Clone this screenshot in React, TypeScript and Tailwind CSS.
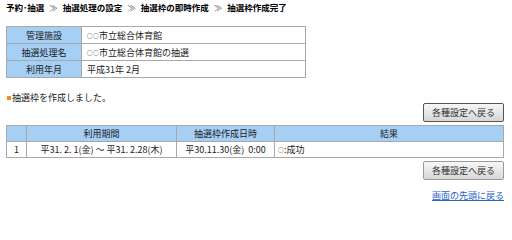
import React from 'react';

const crumbs = ['予約･抽選', '抽選処理の設定', '抽選枠の即時作成', '抽選枠作成完了'];

const Dots: React.FC<{ n?: number }> = ({ n = 2 }) => (
    <span className="text-[5.5px] align-middle tracking-[0.5px]">{'○'.repeat(n)}</span>
);

const info: { label: string; value: React.ReactNode }[] = [
    { label: '管理施設', value: <><Dots />市立総合体育館</> },
    { label: '抽選処理名', value: <><Dots />市立総合体育館の抽選</> },
    { label: '利用年月', value: '平成31年 2月' },
];

const BackButton: React.FC<{ dark?: boolean }> = ({ dark }) => (
    <div className="flex justify-end">
        <button
            className={`w-[81px] h-[19px] text-[9px] leading-none text-[#333] bg-gradient-to-b from-[#f7f7f7] to-[#d6d6d6] border ${dark ? 'border-[#555]' : 'border-[#9a9a9a]'} rounded-[2px]`}
        >
            各種設定へ戻る
        </button>
    </div>
);

export default function App() {
    return (
        <div className="w-[512px] h-[224px] bg-white pl-[6px] pr-[8px] pt-[1px] text-[9px] text-[#222] font-['Noto_Sans_CJK_JP',sans-serif]">
            {/* breadcrumb */}
            <div className="flex items-center h-[12px] leading-[12px] font-bold text-[8.5px] text-black">
                {crumbs.map((c, i) => (
                    <React.Fragment key={c}>
                        {i > 0 && <span className="mx-[5px] font-normal text-[#555]">≫</span>}
                        <span>{c}</span>
                    </React.Fragment>
                ))}
            </div>

            {/* info table */}
            <table className="mt-[13px] w-[300px] border-collapse">
                <tbody>
                    {info.map((r) => (
                        <tr key={r.label} className="h-[17px]">
                            <td className="w-[75px] p-0 border border-[#a8a8a8] bg-[#a6cff6] text-center leading-none">{r.label}</td>
                            <td className="p-0 pl-[5px] border border-[#a8a8a8] leading-none">{r.value}</td>
                        </tr>
                    ))}
                </tbody>
            </table>

            {/* message */}
            <div className="mt-[14px] h-[11px] flex items-center leading-none">
                <span className="w-[4px] h-[4px] bg-[#f08c2a] mr-[1px] ml-[1px]" />
                <span>抽選枠を作成しました。</span>
            </div>

            <BackButton dark />

            {/* result table */}
            <table className="mt-[3px] w-full border-collapse">
                <thead>
                    <tr className="h-[16px] bg-[#a6cff6]">
                        <th className="w-[20px] p-0 border border-[#a8a8a8] font-normal" />
                        <th className="w-[150px] p-0 border border-[#a8a8a8] font-normal leading-none">利用期間</th>
                        <th className="w-[98px] p-0 border border-[#a8a8a8] font-normal leading-none">抽選枠作成日時</th>
                        <th className="p-0 border border-[#a8a8a8] font-normal leading-none">結果</th>
                    </tr>
                </thead>
                <tbody>
                    <tr className="h-[16px]">
                        <td className="p-0 border border-[#a8a8a8] text-center leading-none">1</td>
                        <td className="p-0 border border-[#a8a8a8] text-center leading-none">平31. 2. 1(金) ～ 平31. 2.28(木)</td>
                        <td className="p-0 border border-[#a8a8a8] text-center leading-none whitespace-pre">平30.11.30(金)  0:00</td>
                        <td className="p-0 pl-[3px] border border-[#a8a8a8] leading-none"><Dots n={1} />:成功</td>
                    </tr>
                </tbody>
            </table>

            <div className="mt-[3px]">
                <BackButton />
            </div>

            <div className="mt-[10px] flex justify-end">
                <a href="#" className="text-[9px] leading-[12px] text-[#2a62c9] underline">画面の先頭に戻る</a>
            </div>
        </div>
    );
}
